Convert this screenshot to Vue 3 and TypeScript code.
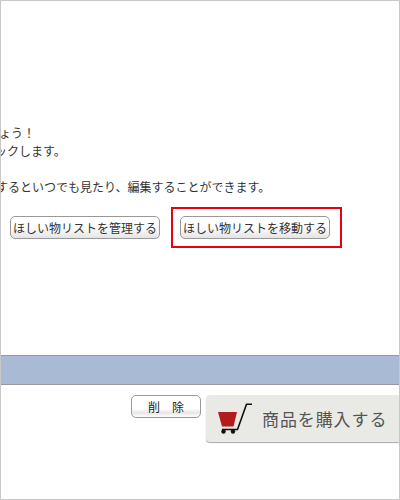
<script setup lang="ts">
const lines: string[] = [
  'さっそくほしい物リストを作成しましょう！',
  '追加したい商品のボタンをクリックします。',
]
const note = 'リストに追加するといつでも見たり、編集することができます。'
</script>

<template>
  <div class="page">
    <section class="intro">
      <p v-for="l in lines" :key="l" class="line">{{ l }}</p>
      <p class="line gap">{{ note }}</p>
    </section>
    <div class="actions">
      <button class="btn" type="button">ほしい物リストを管理する</button>
      <div class="highlight">
        <button class="btn" type="button">ほしい物リストを移動する</button>
      </div>
    </div>
    <div class="band"></div>
    <div class="footer">
      <button class="del" type="button">削　除</button>
      <a class="buy">
        <svg class="cart" width="36" height="31" viewBox="0 0 36 31">
          <path d="M1 9H20L16.500 23.500H5Z" fill="#b31c1c" />
          <path d="M35 1.300H29.500L20.500 26.500H5" fill="none" stroke="#111" stroke-width="1.600" />
          <circle cx="6.500" cy="28.500" r="2.200" fill="#111" />
          <circle cx="16" cy="28.500" r="2.200" fill="#111" />
        </svg>
        <span class="buy-text">商品を購入する</span>
      </a>
    </div>
  </div>
</template>

<style scoped>
.page {
  box-sizing: border-box;
  width: 400px;
  height: 500px;
  border: 1px solid #c8c8c8;
  overflow: hidden;
  display: flex;
  flex-direction: column;
  background: #fff;
  font-family: "Noto Sans CJK JP", sans-serif;
  font-size: 12px;
  color: #333;
}
.intro {
  margin-top: 123px;
  height: 71px;
  flex: none;
}
.line {
  margin: 0;
  height: 18px;
  line-height: 18px;
  white-space: nowrap;
  display: flex;
  justify-content: flex-start;
}
.line:nth-child(1) { margin-left: -206px; }
.line:nth-child(2) { margin-left: -174px; }
.line.gap { margin-top: 18px; margin-left: -77px; }
.actions {
  display: flex;
  align-items: center;
  margin-top: 11px;
  padding-left: 9px;
  height: 42px;
  flex: none;
}
.btn {
  box-sizing: border-box;
  width: 150px;
  height: 23px;
  padding: 0;
  border: 1px solid #999;
  border-radius: 5px;
  background: linear-gradient(#fff 0%, #fff 45%, #e4e4e4 100%);
  font: 12px "Noto Sans CJK JP", sans-serif;
  color: #333;
  white-space: nowrap;
}
.highlight {
  box-sizing: border-box;
  width: 171px;
  height: 41px;
  margin-left: 11px;
  border: 2px solid #e60012;
  display: flex;
  align-items: center;
  padding-left: 7px;
}
.band {
  flex: none;
  height: 28px;
  margin-top: 107px;
  background: #a9bad4;
  border-top: 1px solid #999;
  border-bottom: 1px solid #999;
}
.footer {
  flex: none;
  display: flex;
  align-items: flex-start;
  margin-top: 10px;
  padding-left: 130px;
}
.del {
  box-sizing: border-box;
  width: 70px;
  height: 23px;
  padding: 0;
  border: 1px solid #999;
  border-radius: 5px;
  background: linear-gradient(#fff 0%, #fff 60%, #e6e6e6 80%, #fff 100%);
  font: 12px "Noto Sans CJK JP", sans-serif;
  color: #222;
}
.buy {
  box-sizing: border-box;
  margin-left: 5px;
  flex: 1;
  height: 47px;
  display: flex;
  align-items: center;
  padding-left: 11px;
  background: #e9eae6;
  border-radius: 4px 0 0 4px;
  box-shadow: 0 1px 1px #aaa;
}
.cart { flex: none; }
.buy-text {
  margin-left: 9px;
  font-family: serif, "Noto Sans CJK JP";
  font-size: 17px;
  letter-spacing: 0.9px;
  color: #555;
  white-space: nowrap;
}
</style>
